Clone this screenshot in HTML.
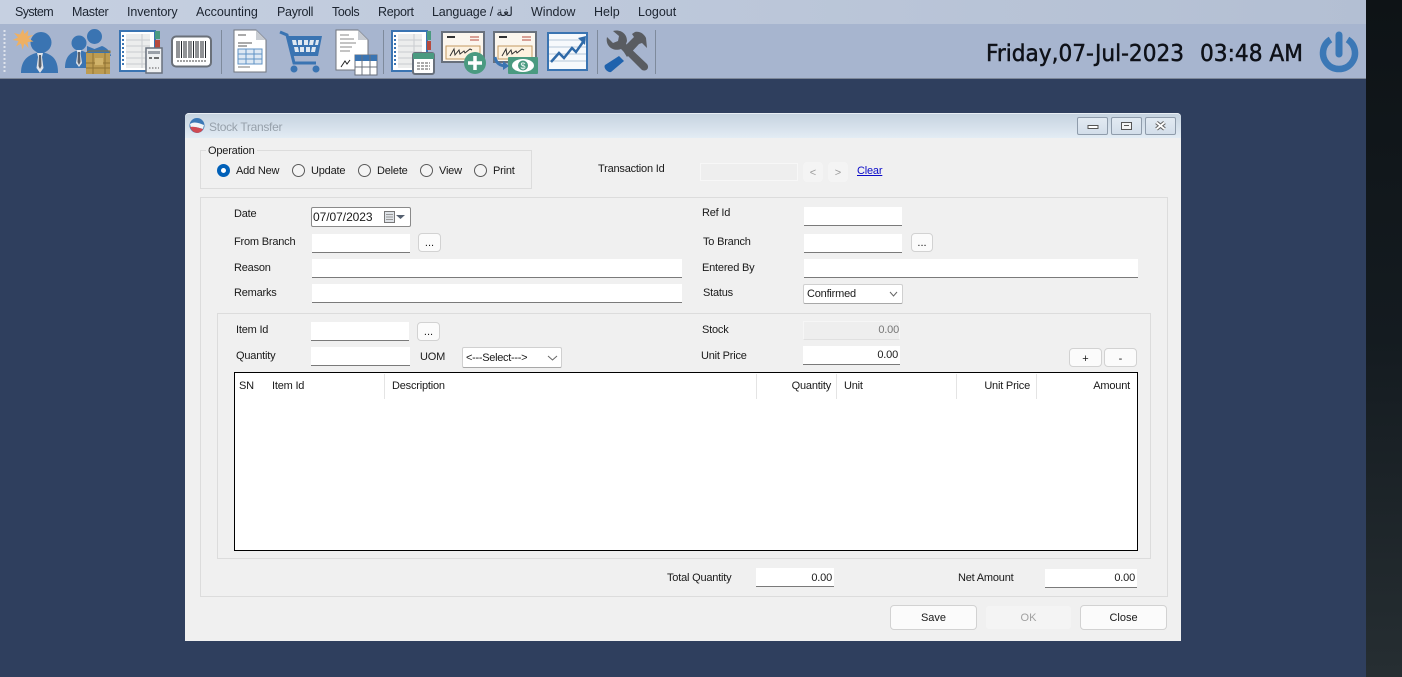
<!DOCTYPE html>
<html><head><meta charset="utf-8"><title>Stock Transfer</title>
<style>
html,body{margin:0;padding:0;width:1402px;height:677px;overflow:hidden;background:#2f3f5e}
body{position:relative;font-family:"Liberation Sans","DejaVu Sans",sans-serif;font-size:11px;color:#1a1a1a}
div,span,a{position:absolute;box-sizing:border-box}
.t{height:14px;line-height:14px;white-space:nowrap;letter-spacing:-.2px}
.m{top:5px;height:14px;line-height:14px;font-size:12.5px;white-space:nowrap;color:#1c2430}
.i{background:#fff;border-bottom:1px solid #7a7a7a}
.b{background:#fbfbfb;border:1px solid #d2d2d2;border-radius:4px;text-align:center;line-height:20px}
.g{border:1px solid #dcdcdc}
.r{width:13px;height:13px;border:1px solid #5a5a5a;border-radius:50%;background:#f4f4f4;top:164px}
.s{background:#fff;border:1px solid #d0d0d0;border-bottom-color:#a8a8a8;border-radius:2px}
.h{top:374px;width:1px;height:25px;background:#e4e4e4}
.w{background:linear-gradient(#e2eaf2,#d3deea);border:1px solid #8f9cab;border-radius:2px;top:117px;width:31px;height:18px}
svg{position:absolute;left:0;top:0}
</style></head><body>
<div style="left:1366px;top:0;width:36px;height:677px;background:linear-gradient(#0e1316,#141b20 50%,#262e32)"></div>
<div style="left:0;top:0;width:1366px;height:24px;background:linear-gradient(90deg,#c6d0e1,#b3bfd3)"></div>
<div style="left:0;top:24px;width:1366px;height:55px;background:#a7b5cf;border-bottom:1px solid #7d8798"></div>
<span class="m" style="left:15px;letter-spacing:-.6px">System</span><span class="m" style="left:72px;letter-spacing:-.3px">Master</span><span class="m" style="left:127px;letter-spacing:-.1px">Inventory</span><span class="m" style="left:196px">Accounting</span><span class="m" style="left:277px;letter-spacing:-.3px">Payroll</span><span class="m" style="left:332px;letter-spacing:-.4px">Tools</span><span class="m" style="left:378px;letter-spacing:-.3px">Report</span><span class="m" style="left:432px;letter-spacing:-.15px">Language / لغة</span><span class="m" style="left:531px">Window</span><span class="m" style="left:594px">Help</span><span class="m" style="left:638px">Logout</span>

<svg width="1402" height="80" viewBox="0 0 1402 80">
<defs>
<g id="tie"><path d="M-3 0L3 0L2 4L3.500 15L0 20L-3.500 15L-2 4Z" fill="#dfe3e9"/><path d="M-1 2L1 2L1.500 13L0 16L-1.500 13Z" fill="#59606b"/></g>
<g id="nb"><rect x="0" y="0" width="35" height="40" fill="#fff" stroke="#3a74b2" stroke-width="2"/><rect x="6" y="3" width="24" height="34" fill="#eceded"/><path d="M6 9H30M6 15H30M6 21H30M6 27H30M6 33H30M22 3V37" stroke="#c9ccd0"/><path d="M3 4v32" stroke="#3a74b2" stroke-width="2" stroke-dasharray="2 2"/></g>
<g id="chq"><rect x="0" y="0" width="42" height="30" fill="#fbf6ee" stroke="#68707c" stroke-width="2"/><path d="M5 5h8" stroke="#333" stroke-width="2"/><path d="M28 5h9M28 8h9" stroke="#b64a3e"/><rect x="4" y="14" width="34" height="13" fill="#fdf2e0" stroke="#c49a62"/><path d="M8 24l4-7l1 6l4-5l1 4l4-3l1 2l5-4l2 1" fill="none" stroke="#333"/></g>
</defs>
<path d="M4.500 30v42" stroke="#dfe4ec" stroke-width="2" stroke-dasharray="2 2"/>
<path d="M221.500 30v44M383.500 30v44M597.500 30v44M655.500 30v44" stroke="#7e8a9c"/>
<!-- icon 1 -->
<circle cx="41" cy="42.500" r="10.500" fill="#3a74b2"/>
<path d="M21 73c0-12 6-19 20-21c13 2 17 9 17 21Z" fill="#3a74b2"/>
<use href="#tie" x="40" y="53"/>
<path d="M23 29l1.500 5l4-4l-1 6l6-1l-5 3.500l5 3l-6 .5l1 6l-4-4.500l-2 6l-1.500-6l-5 3l2.500-5.500l-6-1l5.500-2.500l-4-4.500l6 1.500Z" fill="#eeb063"/>
<!-- icon 2 -->
<circle cx="94.500" cy="36.500" r="7.500" fill="#3a74b2"/><circle cx="79" cy="43" r="7.500" fill="#3a74b2"/>
<path d="M87 46l7.500 3l7.500-3c5 2 8 5 9 10H87Z" fill="#3a74b2"/>
<path d="M65 68c0-11 5-16 14-18c9 2 16 7 17 18Z" fill="#3a74b2"/>
<path d="M76.500 50h5l-1 3l1.500 10l-3 4l-3-4l1.500-10Z" fill="#dfe3e9"/><path d="M78 52h2l.5 10l-1.500 3l-1.500-3Z" fill="#59606b"/>
<rect x="86" y="53" width="24" height="21" fill="#bd9c52"/><path d="M86 53l3-2h21v2M93 53v21M105 53v21M86 63h24M86 68h24" stroke="#8e7233" fill="none"/><path d="M95 58h8v7h-8Z" fill="#d1b36a"/>
<!-- icon 3 -->
<use href="#nb" x="120" y="31"/>
<rect x="155" y="31" width="5" height="8" fill="#4a9a80"/><rect x="155" y="40" width="5" height="8" fill="#b64a3e"/>
<rect x="146" y="48" width="16" height="25" fill="#eef0f2" stroke="#68707c" stroke-width="1.500"/><path d="M148 51h12v3h-12Z" fill="#9aa0a8"/><path d="M149 58h3M154 58h5" stroke="#444" stroke-width="1.500"/><path d="M149 68h10" stroke="#555" stroke-dasharray="1.500 1.500"/>
<!-- icon 4 -->
<rect x="172" y="36.500" width="39" height="30" rx="4" fill="#fff" stroke="#6a7079" stroke-width="2"/>
<path d="M177 41v17M179 41v17M181.500 41v17M184 41v17M186 41v17M189 41v17M191 41v17M193.500 41v17M196 41v17M198 41v17M201 41v17M203 41v17M205.500 41v17" stroke="#23272c" stroke-width="1"/><path d="M177 61h29" stroke="#444" stroke-dasharray="2 1"/>
<!-- icon 5 -->
<path d="M234 30h22l10 10v32h-32Z" fill="#fff" stroke="#70757d"/><path d="M256 30v10h10Z" fill="#c8ccd2"/>
<path d="M238 35h8M238 43h14M238 46h9" stroke="#555"/><rect x="238" y="49" width="24" height="15" fill="#dde8f3" stroke="#5f92c4"/><path d="M238 54h24M238 59h24M246 49v15M254 49v15" stroke="#5f92c4"/><path d="M238 67h12" stroke="#777"/>
<!-- icon 6 -->
<path d="M280 32l7 3l7 28h22" fill="none" stroke="#3a74b2" stroke-width="3"/>
<path d="M288 36h34l-4 20h-25Z" fill="#3a74b2"/><path d="M292 40h4l1 5h-4ZM298 40h4v5h-4ZM304 40h4v5h-4ZM310 40h4l-1 5h-4ZM316 40h3l-1 5h-3ZM294 47h4l1 5h-4ZM300 47h4v5h-4ZM306 47h4v5h-4ZM312 47h4l-1 5h-4Z" fill="#dfe8f1"/>
<circle cx="294" cy="69" r="3.500" fill="#3a74b2"/><circle cx="316" cy="69" r="3.500" fill="#3a74b2"/>
<!-- icon 7 -->
<path d="M336 30h22l10 10v30h-32Z" fill="#fff" stroke="#70757d"/><path d="M358 30v10h10Z" fill="#c8ccd2"/>
<path d="M340 35h9M340 39h14M340 43h16M340 47h12M340 51h10" stroke="#888"/><path d="M341 67l4-6l2 3l3-4" stroke="#222" fill="none"/>
<rect x="355" y="55" width="22" height="20" fill="#fff" stroke="#68707c"/><rect x="355" y="55" width="22" height="6" fill="#3a74b2"/><path d="M355 67h22M362 55v20M370 55v20" stroke="#68707c"/>
<!-- icon 8 -->
<use href="#nb" x="392" y="31"/>
<rect x="427" y="31" width="4" height="9" fill="#4a9a80"/><rect x="427" y="41" width="4" height="9" fill="#b64a3e"/>
<rect x="413" y="53" width="21" height="21" rx="2" fill="#fff" stroke="#68707c" stroke-width="2"/><rect x="413" y="53" width="21" height="6" fill="#4a9a80"/><path d="M417 63h13M417 66h13M417 69h13" stroke="#555" stroke-dasharray="3 1"/>
<!-- icon 9 -->
<use href="#chq" x="442" y="32"/>
<circle cx="475" cy="63" r="11" fill="#4a9a80"/><path d="M475 56v14M468 63h14" stroke="#fff" stroke-width="3.500"/>
<!-- icon 10 -->
<use href="#chq" x="494" y="32"/>
<rect x="508" y="57" width="30" height="17" rx="1" fill="#4a9a80"/><ellipse cx="523" cy="65.500" rx="11" ry="6.500" fill="#fff"/><circle cx="523" cy="65.500" r="5" fill="#4a9a80"/><text x="523" y="69" font-size="9" text-anchor="middle" fill="#fff" font-family="Liberation Sans">$</text>
<path d="M495 57c1 6 5 9 11 9" fill="none" stroke="#3a74b2" stroke-width="3"/><path d="M503 61l6 5l-6 4Z" fill="#3a74b2"/>
<!-- icon 11 -->
<rect x="548" y="33" width="39" height="37" fill="#f6f9fc" stroke="#3a74b2" stroke-width="2"/>
<path d="M549 40h37M549 47h37M549 54h37M549 61h37" stroke="#b5c6d8"/>
<path d="M551 62l8-9l5 5l8-10l4 4l7-10" fill="none" stroke="#2f6aa8" stroke-width="2.500"/><path d="M578 38l8-2l-1 9Z" fill="#2f6aa8"/>
<!-- icon 12 -->
<path d="M607 37l6 6l5-2l1-5l-6-5c8-2 14 3 14 10l-1 3l21 20c3 4-1 8-5 6l-21-21c-8 3-16-3-14-12Z" fill="#595c61"/>
<path d="M622 49l12-12l-2-3l3-2c5-1 9 2 11 6l1 10l-5-5l-3 1l-12 13Z" fill="#595c61"/>
<path d="M619 56l5 5l-13 11c-3 1-8-4-6-7Z" fill="#1f62ad"/>
<!-- power -->
<path d="M1330.500 39.500a16 16 0 1 0 17 0" fill="none" stroke="#3b78b6" stroke-width="6.500"/>
<path d="M1339 35v19" stroke="#3b78b6" stroke-width="7" stroke-linecap="round"/>
<text x="986" y="61" font-family="DejaVu Sans" font-size="23" fill="#0e1118" stroke="#0e1118" stroke-width=".5" textLength="198" lengthAdjust="spacingAndGlyphs">Friday,07-Jul-2023</text>
<text x="1200" y="61" font-family="DejaVu Sans" font-size="23" fill="#0e1118" stroke="#0e1118" stroke-width=".5" textLength="103" lengthAdjust="spacingAndGlyphs">03:48 AM</text>
</svg>

<!-- dialog -->
<div style="left:185px;top:113px;width:996px;height:528px;background:#f0f0f0;border-radius:4px 4px 0 0"></div>
<div style="left:185px;top:113px;width:996px;height:25px;background:linear-gradient(#c6d3e0,#e3ecf4);border-top:1px solid #e8eef4;border-radius:4px 4px 0 0"></div>
<svg width="1402" height="140"><circle cx="197" cy="125.500" r="7.500" fill="#3b78b6"/><path d="M190 124c4-3 9-1 14 1l-1 4c-4-1-8-3-12-1Z" fill="#f1f4f7"/><path d="M190 127c4-1 9 1 13 2c-2 5-10 6-13-2Z" fill="#cf4a52"/></svg>
<span class="t" style="left:209px;top:120px;color:#97a1ab;font-size:12px;letter-spacing:-.3px">Stock Transfer</span>
<div class="w" style="left:1077px"></div><div class="w" style="left:1111px"></div><div class="w" style="left:1145px"></div>
<svg width="1402" height="140"><rect x="1088" y="125.500" width="10" height="3" fill="#fff" stroke="#555"/><rect x="1121.500" y="122.500" width="10" height="7" fill="#f4f4f4" stroke="#555"/><path d="M1124 125.500h5" stroke="#555"/><path d="M1156.500 122.500l8 6.500M1164.500 122.500l-8 6.500" stroke="#666" stroke-width="4"/><path d="M1156.500 122.500l8 6.500M1164.500 122.500l-8 6.500" stroke="#fff" stroke-width="1.800"/></svg>

<div class="g" style="left:200px;top:150px;width:332px;height:39px"></div>
<span class="t" style="left:206px;top:144px;background:#f0f0f0;padding:0 2px">Operation</span>
<div class="r" style="left:217px;border:4px solid #0060b8;background:#fff"></div><span class="t" style="left:236px;top:164px">Add New</span>
<div class="r" style="left:292px"></div><span class="t" style="left:311px;top:164px">Update</span>
<div class="r" style="left:358px"></div><span class="t" style="left:377px;top:164px">Delete</span>
<div class="r" style="left:420px"></div><span class="t" style="left:439px;top:164px">View</span>
<div class="r" style="left:474px"></div><span class="t" style="left:493px;top:164px">Print</span>
<span class="t" style="left:598px;top:162px">Transaction Id</span>
<div style="left:700px;top:163px;width:98px;height:18px;background:#eeeeee;border:1px solid #f7f7f7"></div>
<div class="b" style="left:803px;top:162px;width:20px;height:20px;background:#f4f4f4;border-color:#f4f4f4;color:#9a9a9a">&lt;</div>
<div class="b" style="left:828px;top:162px;width:20px;height:20px;background:#f4f4f4;border-color:#f4f4f4;color:#9a9a9a">&gt;</div>
<a class="t" style="left:857px;top:164px;color:#0a0ac8;text-decoration:underline">Clear</a>

<div class="g" style="left:200px;top:197px;width:968px;height:400px"></div>
<span class="t" style="left:234px;top:207px">Date</span>
<div style="left:311px;top:207px;width:100px;height:20px;background:#fff;border:1px solid #8a8a8a;border-radius:2px"></div>
<span class="t" style="left:313px;top:210px;font-size:12px;letter-spacing:-.05px">07/07/2023</span>
<svg width="1402" height="240"><rect x="384.500" y="211.500" width="10" height="11" fill="#dfe3e8" stroke="#777"/><path d="M386 214.500h7M386 217h7M386 219.500h7" stroke="#999"/><path d="M396 215h9l-4.500 4Z" fill="#556070"/></svg>
<span class="t" style="left:234px;top:235px">From Branch</span><div class="i" style="left:312px;top:234px;width:98px;height:19px"></div><div class="b" style="left:418px;top:233px;width:23px;height:19px;line-height:19px">...</div>
<span class="t" style="left:234px;top:261px">Reason</span><div class="i" style="left:312px;top:259px;width:370px;height:19px"></div>
<span class="t" style="left:234px;top:286px">Remarks</span><div class="i" style="left:312px;top:284px;width:370px;height:19px"></div>
<span class="t" style="left:702px;top:206px">Ref Id</span><div class="i" style="left:804px;top:207px;width:98px;height:19px"></div>
<span class="t" style="left:703px;top:235px">To Branch</span><div class="i" style="left:804px;top:234px;width:98px;height:19px"></div><div class="b" style="left:911px;top:233px;width:22px;height:19px;line-height:19px">...</div>
<span class="t" style="left:702px;top:261px">Entered By</span><div class="i" style="left:804px;top:259px;width:334px;height:19px"></div>
<span class="t" style="left:703px;top:286px">Status</span><div class="s" style="left:803px;top:284px;width:100px;height:20px"></div><span class="t" style="left:807px;top:287px">Confirmed</span>

<div class="g" style="left:217px;top:313px;width:934px;height:246px"></div>
<span class="t" style="left:236px;top:323px">Item Id</span><div class="i" style="left:311px;top:322px;width:98px;height:19px"></div><div class="b" style="left:417px;top:322px;width:23px;height:19px;line-height:19px">...</div>
<span class="t" style="left:236px;top:349px">Quantity</span><div class="i" style="left:311px;top:347px;width:99px;height:19px"></div>
<span class="t" style="left:420px;top:350px">UOM</span><div class="s" style="left:462px;top:347px;width:100px;height:21px"></div><span class="t" style="left:466px;top:351px;letter-spacing:-.3px">&lt;---Select---&gt;</span>
<svg width="1402" height="370"><path d="M890 292l3.500 4l3.500-4M548 356l4.500 4l4.500-4" fill="none" stroke="#666"/></svg>
<span class="t" style="left:702px;top:323px">Stock</span><div style="left:803px;top:321px;width:97px;height:19px;background:#eeeeee;border:1px solid #f6f6f6;border-bottom-color:#e0e0e0"></div><span class="t" style="left:860px;width:39px;top:323px;text-align:right;color:#777">0.00</span>
<span class="t" style="left:701px;top:349px">Unit Price</span><div class="i" style="left:803px;top:346px;width:97px;height:19px"></div><span class="t" style="left:860px;width:38px;top:348px;text-align:right">0.00</span>
<div class="b" style="left:1069px;top:348px;width:33px;height:19px">+</div><div class="b" style="left:1104px;top:348px;width:33px;height:19px">-</div>

<div style="left:234px;top:372px;width:904px;height:179px;background:#fff;border:1.500px solid #000"></div>
<div class="h" style="left:384px"></div><div class="h" style="left:756px"></div><div class="h" style="left:836px"></div><div class="h" style="left:956px"></div><div class="h" style="left:1036px"></div>
<span class="t" style="left:239px;top:379px">SN</span><span class="t" style="left:272px;top:379px">Item Id</span><span class="t" style="left:392px;top:379px">Description</span>
<span class="t" style="left:771px;width:60px;top:379px;text-align:right">Quantity</span><span class="t" style="left:844px;top:379px">Unit</span><span class="t" style="left:970px;width:60px;top:379px;text-align:right">Unit Price</span><span class="t" style="left:1070px;width:60px;top:379px;text-align:right">Amount</span>

<span class="t" style="left:667px;top:571px">Total Quantity</span><div class="i" style="left:756px;top:568px;width:78px;height:19px"></div><span class="t" style="left:790px;width:42px;top:571px;text-align:right">0.00</span>
<span class="t" style="left:958px;top:571px">Net Amount</span><div class="i" style="left:1045px;top:569px;width:92px;height:19px"></div><span class="t" style="left:1090px;width:45px;top:571px;text-align:right">0.00</span>

<div class="b" style="left:890px;top:605px;width:87px;height:25px;line-height:24px">Save</div>
<div class="b" style="left:985px;top:605px;width:87px;height:25px;line-height:24px;background:#f4f4f4;border-color:#f0f0f0;color:#a0a0a0">OK</div>
<div class="b" style="left:1080px;top:605px;width:87px;height:25px;line-height:24px">Close</div>
</body></html>
